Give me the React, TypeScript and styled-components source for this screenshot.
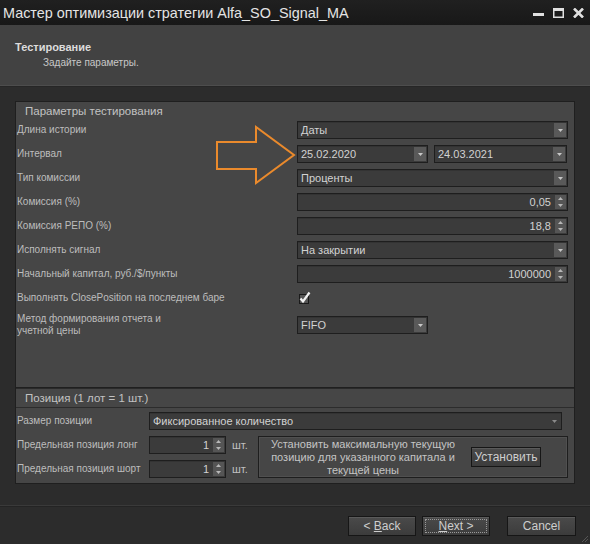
import React from 'react';
import styled, { createGlobalStyle } from 'styled-components';

const GlobalStyle = createGlobalStyle`
    html, body {
        margin: 0;
        padding: 0;
        background: #2c2c2c;
    }
    * {
        box-sizing: border-box;
    }
`;

const Window = styled.div`
    position: relative;
    width: 590px;
    height: 544px;
    display: flex;
    flex-direction: column;
    overflow: hidden;
    background: #2c2c2c;
    font-family: "Liberation Sans", "DejaVu Sans", Arial, sans-serif;
    color: #c4c4c4;
`;

const TitleBar = styled.div`
    height: 25px;
    flex: 0 0 25px;
    display: flex;
    align-items: center;
    justify-content: space-between;
    padding: 0 6px 0 3px;
    background: linear-gradient(#202020, #181818);
    color: #e4e4e4;
    font-size: 14.4px;
`;

const WindowControls = styled.div`
    display: flex;
    align-items: center;
    gap: 9px;
`;

const Header = styled.div`
    height: 61px;
    flex: 0 0 61px;
    padding: 15px 15px 0;
    background: #424242;
    border-bottom: 1px solid #4d4d4d;
    box-shadow: 0 1px 0 #262626;
`;

const HeaderTitle = styled.div`
    font-size: 11px;
    font-weight: bold;
    color: #dcdcdc;
    line-height: 14px;
`;

const HeaderSub = styled.div`
    font-size: 10px;
    color: #c8c8c8;
    padding-left: 28px;
    margin-top: 2px;
    line-height: 14px;
`;

const Body = styled.div`
    padding: 15px 15px 0 15px;
    flex: 0 0 auto;
`;

const Group = styled.div<{ $height: number; $joined?: boolean }>`
    height: ${(p) => p.$height}px;
    width: 560px;
    background: #464646;
    border: 1px solid #1f1f1f;
    border-top-width: ${(p) => (p.$joined ? 0 : 1)}px;
`;

const GroupTitle = styled.div<{ $line?: boolean }>`
    height: ${(p) => (p.$line ? 20 : 18)}px;
    line-height: 18px;
    padding-left: 9px;
    font-size: 11.5px;
    color: #c2c2c2;
    border-top: ${(p) => (p.$line ? '1px solid #2a2a2a' : 'none')};
    border-bottom: ${(p) => (p.$line ? '1px solid #2c2c2c' : 'none')};
`;

const Rows = styled.div`
    display: flex;
    flex-direction: column;
    gap: 6px;
    padding: 1px 6px 0 1px;
`;

const Row = styled.div`
    display: grid;
    grid-template-columns: 280px 1fr;
    align-items: center;
    min-height: 18px;
`;

const Label = styled.div`
    font-size: 10px;
    color: #bdbdbd;
    line-height: 12px;
    white-space: nowrap;
`;

const Pair = styled.div`
    display: grid;
    grid-template-columns: 131px 133px;
    column-gap: 6px;
`;

const Field = styled.div<{ $width?: number; $align?: string }>`
    position: relative;
    height: 18px;
    width: ${(p) => (p.$width ? `${p.$width}px` : '100%')};
    background: #3b3b3b;
    border: 1px solid #1e1e1e;
    box-shadow: inset 0 1px 0 #333;
    display: flex;
    align-items: center;
    justify-content: ${(p) => (p.$align === 'right' ? 'flex-end' : 'flex-start')};
    padding: 0 16px 0 3px;
    font-size: 11px;
    color: #d2d2d2;
`;

const DropButton = styled.div<{ $flat?: boolean }>`
    position: absolute;
    right: 1px;
    top: 1px;
    bottom: 1px;
    width: 12px;
    background: ${(p) => (p.$flat ? 'transparent' : '#595959')};
    display: flex;
    align-items: center;
    justify-content: center;
`;

const SpinButton = styled.div`
    position: absolute;
    right: 1px;
    top: 1px;
    bottom: 1px;
    width: 11px;
    background: #555;
    display: flex;
    flex-direction: column;
    align-items: center;
    justify-content: space-around;
`;

const Group2Grid = styled.div`
    display: grid;
    grid-template-columns: 132px 77px 32px 310px;
    grid-template-rows: 18px 18px 18px;
    row-gap: 6px;
    align-items: center;
    padding: 4px 0 0 1px;
`;

const WideCell = styled.div`
    grid-column: 2 / 5;
    padding-right: 6px;
`;

const Unit = styled.div`
    font-size: 11px;
    color: #c0c0c0;
    padding-left: 6px;
`;

const SetBox = styled.div`
    grid-column: 4;
    grid-row: 2 / 4;
    align-self: stretch;
    border: 1px solid #1e1e1e;
    box-shadow: inset 0 0 0 1px #505050;
    display: flex;
    align-items: center;
    padding-left: 6px;
    gap: 10px;
`;

const SetText = styled.div`
    width: 196px;
    text-align: center;
    font-size: 11px;
    line-height: 13px;
    color: #c4c4c4;
`;

const Button = styled.div<{ $width: number; $focus?: boolean }>`
    position: relative;
    width: ${(p) => p.$width}px;
    height: 20px;
    display: flex;
    align-items: center;
    justify-content: center;
    background: linear-gradient(#4a4a4a, #3c3c3c);
    border: 1px solid #161616;
    box-shadow: inset 0 1px 0 #5a5a5a;
    font-size: 12px;
    color: #cecece;
    &::after {
        content: '';
        display: ${(p) => (p.$focus ? 'block' : 'none')};
        position: absolute;
        inset: 2px;
        border: 1px dotted #9a9a9a;
    }
`;

const Footer = styled.div`
    flex: 1;
    margin-top: 21px;
    border-top: 1px solid #3a3a3a;
    box-shadow: inset 0 1px 0 #242424;
    display: flex;
    justify-content: flex-end;
    align-items: flex-start;
    padding: 10px 14px 0 0;
`;

const ButtonRow = styled.div`
    display: flex;
    gap: 6px;
`;

const CancelGap = styled.div`
    width: 5px;
`;

const Arrow = styled.svg`
    position: absolute;
    left: 215px;
    top: 125px;
`;

const Grip = styled.svg`
    position: absolute;
    right: 1px;
    bottom: 1px;
`;

const Tri = ({ up, color = '#cfcfcf' }: { up?: boolean; color?: string }) => (
    <svg width="5" height="3" viewBox="0 0 5 3">
        <polygon points={up ? '0,3 5,3 2.5,0' : '0,0 5,0 2.5,3'} fill={color} />
    </svg>
);

const Combo = ({ value, width, flat }: { value: string; width?: number; flat?: boolean }) => (
    <Field $width={width}>
        {value}
        <DropButton $flat={flat}>
            <Tri color={flat ? '#8a8a8a' : '#c8c8c8'} />
        </DropButton>
    </Field>
);

const Spin = ({ value, width }: { value: string; width?: number }) => (
    <Field $width={width} $align="right">
        {value}
        <SpinButton>
            <Tri up color="#b8b8b8" />
            <Tri color="#b8b8b8" />
        </SpinButton>
    </Field>
);

const Check = () => (
    <svg width="16" height="14" viewBox="0 0 16 14">
        <rect x="2.5" y="3.5" width="9" height="9" fill="#555" stroke="#1a1a1a" />
        <path d="M3.5 7.5 L6 10.5 L12.5 1.5" stroke="#f2f2f2" strokeWidth="2.2" fill="none" />
    </svg>
);

export default function App() {
    return (
        <Window>
            <GlobalStyle />
            <TitleBar>
                <span>Мастер оптимизации стратегии Alfa_SO_Signal_MA</span>
                <WindowControls>
                    <svg width="11" height="10" viewBox="0 0 11 10">
                        <rect x="0" y="5" width="11" height="3" fill="#e0e0e0" />
                    </svg>
                    <svg width="11" height="10" viewBox="0 0 11 10">
                        <rect x="0.75" y="0.75" width="9.5" height="8.5" fill="none" stroke="#e0e0e0" strokeWidth="1.5" />
                        <rect x="0" y="0" width="11" height="3" fill="#e0e0e0" />
                    </svg>
                    <svg width="11" height="10" viewBox="0 0 11 10">
                        <path d="M1 0.5 L10 9.5 M10 0.5 L1 9.5" stroke="#e0e0e0" strokeWidth="2.6" />
                    </svg>
                </WindowControls>
            </TitleBar>

            <Header>
                <HeaderTitle>Тестирование</HeaderTitle>
                <HeaderSub>Задайте параметры.</HeaderSub>
            </Header>

            <Body>
                <Group $height={287}>
                    <GroupTitle>Параметры тестирования</GroupTitle>
                    <Rows>
                        <Row>
                            <Label>Длина истории</Label>
                            <Combo value="Даты" />
                        </Row>
                        <Row>
                            <Label>Интервал</Label>
                            <Pair>
                                <Combo value="25.02.2020" />
                                <Combo value="24.03.2021" />
                            </Pair>
                        </Row>
                        <Row>
                            <Label>Тип комиссии</Label>
                            <Combo value="Проценты" />
                        </Row>
                        <Row>
                            <Label>Комиссия (%)</Label>
                            <Spin value="0,05" />
                        </Row>
                        <Row>
                            <Label>Комиссия РЕПО (%)</Label>
                            <Spin value="18,8" />
                        </Row>
                        <Row>
                            <Label>Исполнять сигнал</Label>
                            <Combo value="На закрытии" />
                        </Row>
                        <Row>
                            <Label>Начальный капитал, руб./$/пункты</Label>
                            <Spin value="1000000" />
                        </Row>
                        <Row>
                            <Label>Выполнять ClosePosition на последнем баре</Label>
                            <Check />
                        </Row>
                        <Row>
                            <Label>
                                Метод формирования отчета и
                                <br />
                                учетной цены
                            </Label>
                            <Combo value="FIFO" width={131} />
                        </Row>
                    </Rows>
                </Group>
                <Group $height={96} $joined>
                    <GroupTitle $line>Позиция (1 лот = 1 шт.)</GroupTitle>
                    <Group2Grid>
                        <Label>Размер позиции</Label>
                        <WideCell>
                            <Combo value="Фиксированное количество" flat />
                        </WideCell>
                        <Label>Предельная позиция лонг</Label>
                        <Spin value="1" />
                        <Unit>шт.</Unit>
                        <SetBox>
                            <SetText>
                                Установить максимальную текущую позицию для указанного капитала и текущей цены
                            </SetText>
                            <Button $width={70}>Установить</Button>
                        </SetBox>
                        <Label>Предельная позиция шорт</Label>
                        <Spin value="1" />
                        <Unit>шт.</Unit>
                    </Group2Grid>
                </Group>
            </Body>

            <Footer>
                <ButtonRow>
                    <Button $width={68}>
                        &lt;&nbsp;<u>B</u>ack
                    </Button>
                    <Button $width={68} $focus>
                        <u>N</u>ext&nbsp;&gt;
                    </Button>
                    <CancelGap />
                    <Button $width={69}>Cancel</Button>
                </ButtonRow>
            </Footer>

            <Arrow width="84" height="62" viewBox="0 0 84 62">
                <polygon
                    points="2,17 41,17 41,2 79,30 41,58 41,44 2,44"
                    fill="none"
                    stroke="#ea8a2c"
                    strokeWidth="2"
                    strokeLinejoin="miter"
                />
            </Arrow>

            <Grip width="8" height="8" viewBox="0 0 8 8">
                <path d="M7 1 L1 7 M7 4 L4 7" stroke="#555" strokeWidth="1" />
            </Grip>
        </Window>
    );
}
